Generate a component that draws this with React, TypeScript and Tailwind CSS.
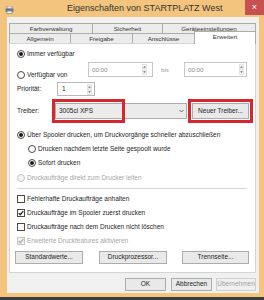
import React from 'react';

function Radio({ on, off }: { on?: boolean; off?: boolean }) {
  return (
    <span
      className={`w-[8px] h-[8px] rounded-full border flex items-center justify-center shrink-0 ${
        off ? 'border-[#c4c4c4] bg-[#f4f4f4]' : 'border-[#4a4a4a] bg-white'
      }`}
    >
      {on && <span className={`w-[4px] h-[4px] rounded-full ${off ? 'bg-[#c4c4c4]' : 'bg-[#1a1a1a]'}`} />}
    </span>
  );
}

function Check({ on, off }: { on?: boolean; off?: boolean }) {
  return (
    <span
      className={`w-[8px] h-[8px] border flex items-center justify-center shrink-0 ${
        off ? 'border-[#c4c4c4] bg-[#f4f4f4]' : 'border-[#4a4a4a] bg-white'
      }`}
    >
      {on && (
        <svg width="6" height="6" viewBox="0 0 6 6">
          <path d="M0.7 3.1 L2.3 4.7 L5.3 1.1" fill="none" stroke={off ? '#a8a8a8' : '#222'} strokeWidth="1.3" />
        </svg>
      )}
    </span>
  );
}

function Arrows() {
  return (
    <svg width="5" height="11" viewBox="0 0 5 11" className="shrink-0">
      <rect x="0.5" y="0.5" width="4" height="4.5" fill="#f2f2f2" stroke="#d0d0d0" strokeWidth="0.5" />
      <rect x="0.5" y="6" width="4" height="4.5" fill="#f2f2f2" stroke="#d0d0d0" strokeWidth="0.5" />
      <path d="M1.2 3.8 L2.5 2 L3.8 3.8 Z" fill="#707070" />
      <path d="M1.2 7.2 L2.5 9 L3.8 7.2 Z" fill="#707070" />
    </svg>
  );
}

function Btn({ label, w, className = '' }: { label: string; w: string; className?: string }) {
  return (
    <div
      className={`${w} h-full border border-[#acacac] bg-[#e9e9e9] flex items-center justify-center text-[6.5px] leading-none whitespace-nowrap ${className}`}
    >
      {label}
    </div>
  );
}

function Row({ children, className = '' }: { children: React.ReactNode; className?: string }) {
  return (
    <div className={`h-[10px] flex items-center gap-[2px] text-[6.5px] leading-[10px] whitespace-nowrap ${className}`}>
      {children}
    </div>
  );
}

export default function App() {
  const tabBase =
    'h-[10px] border-l border-t border-[#acacac] bg-[#ececec] text-[6.2px] leading-[9px] text-center text-[#333] whitespace-nowrap';
  return (
    <div className="w-[264px] h-[300px] overflow-hidden bg-[#f3c47d] flex flex-col font-['Liberation_Sans',Arial,sans-serif] text-[#1c1c1c]">
      {/* title bar */}
      <div className="h-[17px] flex items-start shrink-0">
        <svg width="9" height="8" viewBox="0 0 9 8" className="mt-[6px] ml-[5px] shrink-0">
          <rect x="2" y="0" width="5" height="3" fill="#e8e8e8" stroke="#777" strokeWidth="0.6" />
          <rect x="0.5" y="2.5" width="8" height="3.5" rx="0.5" fill="#6d7a86" />
          <rect x="2" y="5" width="5" height="2.5" fill="#f4f4f4" stroke="#777" strokeWidth="0.6" />
        </svg>
        <div className="ml-[53px] flex-1 text-[9px] leading-[16px] text-[#333] whitespace-nowrap">
          Eigenschaften von STARTPLATZ West
        </div>
        <div className="w-[19px] h-[15px] bg-[#c75050] text-white text-[9px] leading-[14px] text-center">×</div>
      </div>

      {/* dialog body */}
      <div className="flex-1 ml-[7px] mr-[5px] bg-[#f0f0f0] flex flex-col pt-[6px] pl-[2px] pr-[3px]">
        <div className="flex">
          <div className={`${tabBase} w-[83px]`}>Farbverwaltung</div>
          <div className={`${tabBase} w-[70px]`}>Sicherheit</div>
          <div className={`${tabBase} w-[94px] border-r`}>Geräteeinstellungen</div>
        </div>
        <div className="flex items-end h-[10px]">
          <div className={`${tabBase} w-[61px]`}>Allgemein</div>
          <div className={`${tabBase} w-[62px]`}>Freigabe</div>
          <div className={`${tabBase} w-[62px]`}>Anschlüsse</div>
          <div className="relative z-10 w-[62px] h-[13px] -mb-px border border-b-0 border-[#acacac] bg-white text-[6.2px] leading-[10px] text-center text-[#333]">
            Erweitert
          </div>
        </div>

        {/* panel */}
        <div className="h-[230px] bg-white border border-[#d4d4d4] flex flex-col pl-[7px]">
          <Row className="mt-[5px]">
            <Radio on />
            <span>Immer verfügbar</span>
          </Row>

          <div className="mt-[3px] h-[18px] flex">
            <Row className="w-[71px] shrink-0 self-end">
              <Radio />
              <span>Verfügbar von</span>
            </Row>
            <div className="w-[65px] shrink-0 h-[15px] border border-[#c8c8c8] bg-white flex items-center justify-between pl-[3px] pr-[5px]">
              <span className="text-[6.2px] text-[#8a8a8a]">00:00</span>
              <Arrows />
            </div>
            <div className="w-[31px] shrink-0 h-[15px] pl-[8px] text-[6.2px] leading-[15px] text-[#9a9a9a]">bis</div>
            <div className="w-[63px] shrink-0 h-[15px] border border-[#c8c8c8] bg-white flex items-center justify-between pl-[3px] pr-[2px]">
              <span className="text-[6.2px] text-[#8a8a8a]">00:00</span>
              <Arrows />
            </div>
          </div>

          <div className="mt-[2px] h-[14px] flex items-center text-[6.5px]">
            <span className="w-[40px] shrink-0">Priorität:</span>
            <div className="w-[38px] h-[14px] border border-[#b8b8b8] bg-white flex items-center justify-between pl-[4px] pr-[2px]">
              <span>1</span>
              <Arrows />
            </div>
          </div>

          <div className="mt-[3px] h-[24px] flex items-center text-[6.5px]">
            <span className="w-[38px] shrink-0">Treiber:</span>
            <div className="relative w-[132px] shrink-0 h-[16px] border border-[#acacac] bg-[#ebebeb] flex items-center justify-between pl-[3px] pr-[2px]">
              <span>3005ci XPS</span>
              <svg width="5" height="4" viewBox="0 0 5 4">
                <path d="M0.5 1 L2.5 3 L4.5 1" fill="none" stroke="#555" strokeWidth="0.9" />
              </svg>
              <div className="absolute -left-[4px] -top-[5px] w-[73px] h-[24px] border-[3px] border-[#d8262e]" />
            </div>
            <div className="ml-[1px] w-[65px] shrink-0 h-[24px] border-[3px] border-[#d8262e] p-px">
              <Btn label="Neuer Treiber..." w="w-full" />
            </div>
          </div>

          <Row className="mt-[7px]">
            <Radio on />
            <span>Über Spooler drucken, um Druckvorgänge schneller abzuschließen</span>
          </Row>
          <Row className="mt-[4px] pl-[11px]">
            <Radio />
            <span>Drucken nachdem letzte Seite gespoolt wurde</span>
          </Row>
          <Row className="mt-[4px] pl-[11px]">
            <Radio on />
            <span>Sofort drucken</span>
          </Row>
          <Row className="mt-[5px] text-[#a6a6a6]">
            <Radio off />
            <span>Druckaufträge direkt zum Drucker leiten</span>
          </Row>

          <div className="mt-[5px] h-px bg-[#d5d5d5] mr-[8px]" />

          <Row className="mt-[5px]">
            <Check />
            <span>Fehlerhafte Druckaufträge anhalten</span>
          </Row>
          <Row className="mt-[4px]">
            <Check on />
            <span>Druckaufträge im Spooler zuerst drucken</span>
          </Row>
          <Row className="mt-[4px]">
            <Check />
            <span>Druckaufträge nach dem Drucken nicht löschen</span>
          </Row>
          <Row className="mt-[4px] text-[#a6a6a6]">
            <Check on off />
            <span>Erweiterte Druckfeatures aktivieren</span>
          </Row>

          <div className="mt-[5px] h-[13px] flex -ml-[2px]">
            <Btn label="Standardwerte..." w="w-[68px]" />
            <Btn label="Druckprozessor..." w="w-[68px]" className="ml-[16px]" />
            <Btn label="Trennseite..." w="w-[67px]" className="ml-[15px]" />
          </div>
        </div>

        <div className="mt-[5px] h-[13px] flex justify-end">
          <Btn label="OK" w="w-[41px]" className="border-[#4a8fd0]" />
          <Btn label="Abbrechen" w="w-[41px]" className="ml-[5px]" />
          <Btn label="Übernehmen" w="w-[40px]" className="ml-[4px] text-[#a0a0a0] border-[#cfcfcf] bg-[#f0f0f0]" />
        </div>
      </div>

      <div className="h-[4px] shrink-0" />
      <div className="h-[3px] shrink-0 bg-[#3a3d42]" />
    </div>
  );
}
